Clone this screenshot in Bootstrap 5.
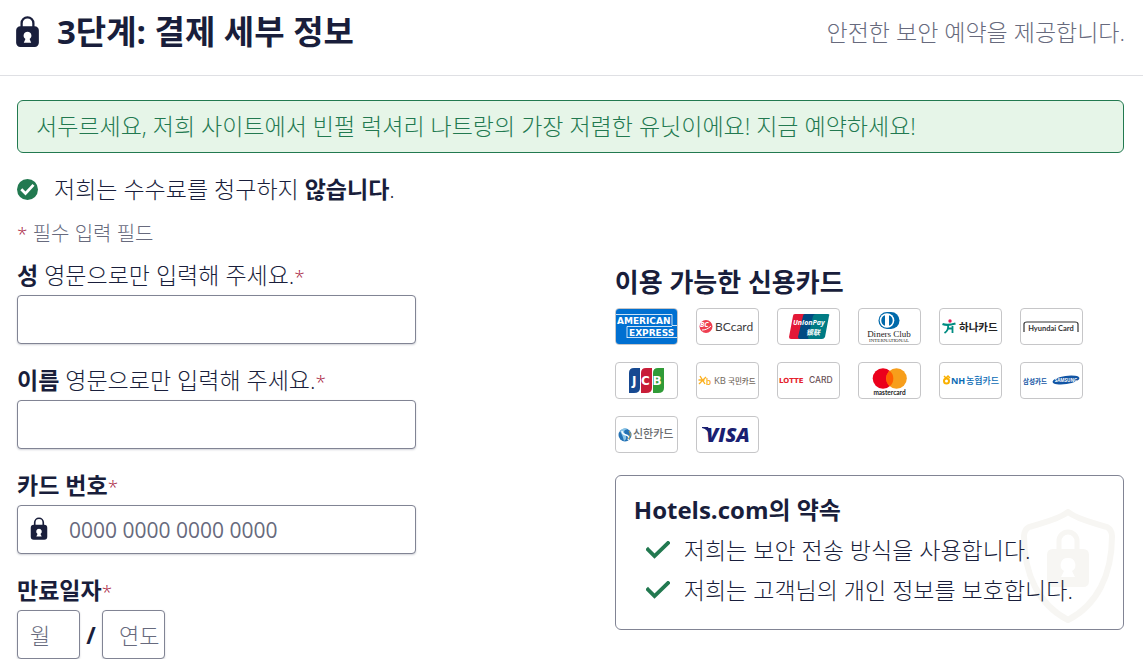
<!DOCTYPE html>
<html lang="ko">
<head>
<meta charset="utf-8">
<meta name="viewport" content="width=device-width, initial-scale=1">
<title>3단계: 결제 세부 정보</title>
<link href="https://cdn.jsdelivr.net/npm/bootstrap@5.3.0/dist/css/bootstrap.min.css" rel="stylesheet">
<style>
  :root { --ink: #191e3b; --muted: #676a7d; --line: #818494; --green: #227950; }
  body { font-family: "Open Sans", "Noto Sans CJK KR", sans-serif; font-size: 23px; line-height: 30px; font-weight: 300; color: var(--ink); background: #fff; }
  .page-head { height: 76px; padding: 0 18px 12px 15px; border-bottom: 1px solid #dfe0e4; }
  .page-head h1 { font-size: 33px; line-height: 40px; font-weight: 700; gap: 17px; }
  .page-body { padding: 24px 19px 0 17px; }
  .muted { color: var(--muted); }
  .deal { padding: 10px 18px 11px; border: 1px solid var(--green); border-radius: 6px; color: var(--green); background: #e6f5e8; }
  .no-fee { height: 30px; margin-top: 21px; }
  .no-fee b, .field-label b { font-weight: 700; }
  .hint { height: 26px; margin-top: 17px; font-size: 20px; line-height: 26px; }
  .star { color: #a7183c; font-size: 19px; line-height: 20px; }
  .pay-grid { display: grid; grid-template-columns: 36% 46%; justify-content: space-between; align-items: start; margin-top: 14px; }
  .fields { display: grid; gap: 22px; }
  .field-label { display: block; height: 30px; margin-bottom: 4px; line-height: 28px; white-space: nowrap; }
  .form-control { height: 49px; padding: 0 12px; border: 1px solid var(--line); border-radius: 4px; box-shadow: 0 1px 2px #191e3b33; color: var(--ink); font-size: 21px; font-weight: 300; }
  .form-control::placeholder { color: var(--muted); opacity: 1; }
  .card-number { padding-left: 51px; font-weight: 400; }
  .lock-mark { left: 13px; top: 11px; }
  .expiry { width: 63px; padding-right: 2px; font-size: 22px; }
  .expiry-year { padding-left: 16px; }
  .slash { width: 22px; text-align: center; font-weight: 700; }
  .side-title { padding-top: 3px; font-size: 26px; line-height: 36px; font-weight: 700; }
  .brands { display: flex; flex-wrap: wrap; gap: 17px 18px; margin: 8px 0 22px; padding: 0; list-style: none; }
  .brands svg { display: block; width: 63px; height: 37px; border: 1px solid #c6c6c8; border-radius: 4px; }
  .promise { padding: 17px 18px 19px; border: 1px solid var(--line); border-radius: 6px; }
  .promise h2 { font-size: 24px; line-height: 34px; font-weight: 700; }
  .promise ul { margin: 3px 0 0; }
  .promise li { display: flex; align-items: center; gap: 14px; height: 40px; padding-left: 12px; white-space: nowrap; }
  .promise ul, .promise h2 { position: relative; z-index: 1; }
  .shield { right: 8px; top: 33px; }
</style>
</head>
<body>
<svg class="d-none" aria-hidden="true">
  <symbol id="lock" viewBox="0 0 24 30">
    <path d="M6.300 11V7a5.700 5.700 0 0 1 11.400 0v4" fill="none" stroke="currentColor" stroke-width="2.200"/>
    <path fill="currentColor" fill-rule="evenodd" d="M5 10h14a4 4 0 0 1 4 4v12a4 4 0 0 1-4 4H5a4 4 0 0 1-4-4V14a4 4 0 0 1 4-4zm7 5.200a3.800 3.800 0 0 0-2 7l-1.600 3.600h7.200L14 22.200a3.800 3.800 0 0 0-2-7z"/>
  </symbol>
  <symbol id="tick" viewBox="0 0 24 18">
    <path d="M2 8.500l6.500 6.500L22 2" fill="none" stroke="#227950" stroke-width="3.800" stroke-linecap="square"/>
  </symbol>
</svg>

<header class="page-head d-flex align-items-center justify-content-between">
  <h1 class="d-flex align-items-center m-0"><svg width="25" height="31" aria-hidden="true"><use href="#lock"/></svg>3단계: 결제 세부 정보</h1>
  <span class="muted">안전한 보안 예약을 제공합니다.</span>
</header>

<main class="page-body">
  <div class="deal" role="status">서두르세요, 저희 사이트에서 빈펄 럭셔리 나트랑의 가장 저렴한 유닛이에요! 지금 예약하세요!</div>

  <p class="no-fee d-flex align-items-center mb-0">
    <svg class="me-3" width="21" height="21" viewBox="0 0 21 21" aria-hidden="true"><circle cx="10.500" cy="10.500" r="10.500" fill="#227950"/><path d="M4.300 10.200l4.200 4.200 8-8.500" fill="none" stroke="#fff" stroke-width="2.800"/></svg>
    <span>저희는 수수료를 청구하지 <b>않습니다</b>.</span>
  </p>
  <p class="hint muted mb-0"><span class="star">*</span> 필수 입력 필드</p>

  <div class="pay-grid">
    <form class="fields">
      <div>
        <label class="field-label" for="last"><b>성</b> 영문으로만 입력해 주세요.<span class="star">*</span></label>
        <input class="form-control" id="last" type="text" required>
      </div>
      <div>
        <label class="field-label" for="first"><b>이름</b> 영문으로만 입력해 주세요.<span class="star">*</span></label>
        <input class="form-control" id="first" type="text" required>
      </div>
      <div>
        <label class="field-label" for="number"><b>카드 번호</b><span class="star">*</span></label>
        <div class="position-relative">
          <svg class="lock-mark position-absolute" width="18" height="25" aria-hidden="true"><use href="#lock"/></svg>
          <input class="form-control card-number" id="number" type="text" inputmode="numeric" placeholder="0000 0000 0000 0000" required>
        </div>
      </div>
      <div>
        <label class="field-label" for="month"><b>만료일자</b><span class="star">*</span></label>
        <div class="d-flex align-items-center">
          <input class="form-control expiry" id="month" type="text" placeholder="월" required>
          <span class="slash">/</span>
          <input class="form-control expiry expiry-year" id="year" type="text" placeholder="연도" aria-label="연도" required>
        </div>
      </div>
    </form>

    <aside>
      <h2 class="side-title m-0">이용 가능한 신용카드</h2>
      <ul class="brands">
        <li><svg viewBox="0 0 61 35" role="img" aria-label="American Express"><path fill="#0070d1" d="M0 0h61v35H0z"/><path fill="none" stroke="#fff" stroke-width=".8" d="M0 5.500h56v11h5M11 29V17.500h45M11 28.500h50"/><g font-family="DejaVu Sans" font-weight="700" fill="#fff"><text x="1" y="14.500" font-size="9">AMERICAN</text><text x="13" y="27" font-size="9">EXPRESS</text></g></svg></li>
        <li><svg viewBox="0 0 61 35" role="img" aria-label="BC card"><circle cx="9" cy="17.500" r="6.500" fill="#ee3e50"/><text x="3" y="18" font-family="Open Sans" font-size="7" font-weight="700" font-style="italic" fill="#fff">BC</text><path d="M5 21c3 0 6-1 9-4" stroke="#fff" fill="none"/><text x="18" y="22" font-family="Lato" font-size="12" font-weight="400" fill="#403c40">BCcard</text></svg></li>
        <li><svg viewBox="0 0 61 35" role="img" aria-label="UnionPay"><path fill="#e31837" d="M17 5h14l-6 25H13q-2 0-2-2l4-21q0-2 2-2z"/><path fill="#014a82" d="M27 5h13l-6 25H22q-2 0-2-2l5-21q0-2 2-2z"/><path fill="#007b84" d="M38 5h12q2 0 1 2l-4 21q-1 2-3 2H31q-1 0-1-2l5-21q1-2 3-2z"/><g fill="#fff" font-style="italic" font-weight="700"><text x="15" y="16" font-family="Open Sans" font-size="7">UnionPay</text><text x="28" y="26" font-family="Noto Sans CJK SC" font-size="7">银联</text></g></svg></li>
        <li><svg viewBox="0 0 61 35" role="img" aria-label="Diners Club"><path fill="#0069aa" d="M28 3h4a8.500 8.500 0 0 1 0 17h-4a8.500 8.500 0 0 1 0-17z"/><circle cx="28" cy="11.500" r="7.300" fill="#fff"/><path fill="#0069aa" d="M26 6.300v10.400a5.500 5.500 0 0 1 0-10.400zm4 0v10.400a5.500 5.500 0 0 0 0-10.400z"/><g fill="#1d1d1b" font-family="Liberation Serif" text-anchor="middle"><text x="30" y="27.500" font-size="9">Diners Club</text><text x="30" y="33" font-size="5">INTERNATIONAL</text></g></svg></li>
        <li><svg viewBox="0 0 61 35" role="img" aria-label="하나카드"><circle cx="10" cy="12" r="1.700" fill="#e31c58"/><path d="M2.500 15q5 2 13-.5" fill="none" stroke="#008c82" stroke-width="2.200"/><path d="M8 16q1 5-3.500 8M12.500 17v7M8 19.500h4" fill="none" stroke="#008c82" stroke-width="1.800"/><text x="19" y="22" font-family="Noto Sans CJK KR" font-weight="700" font-size="10.500" fill="#222">하나카드</text></svg></li>
        <li><svg viewBox="0 0 61 35" role="img" aria-label="Hyundai Card"><path d="M3 23v-8q0-2 3-2h48q3 0 3 2v8" fill="none" stroke="#333" stroke-width="1.200"/><text x="30" y="22" text-anchor="middle" font-family="Lato" font-weight="700" font-size="7.500" fill="#333">Hyundai Card</text></svg></li>

        <li><svg viewBox="0 0 61 35" role="img" aria-label="JCB"><path fill="#174991" d="M18 5h6v20q0 5-6 5h-5V10q0-5 5-5z"/><path fill="#c81d38" d="M30 5h6v20q0 5-6 5h-5V10q0-5 5-5z"/><path fill="#309b37" d="M42 5h6v20q0 5-6 5h-5V10q0-5 5-5z"/><g fill="#fff" font-family="DejaVu Sans" font-weight="700" font-size="12"><text x="16" y="22">J</text><text x="25" y="22">C</text><text x="36.500" y="22">B</text></g></svg></li>
        <li><svg viewBox="0 0 61 35" role="img" aria-label="KB 국민카드"><path d="M3 13l5 8M2 21l7-7M1.500 17h6" stroke="#fbb022" stroke-width="1.400"/><text x="9" y="22" font-family="Lato" font-weight="700" font-size="9" fill="#fbb022">b</text><text x="17" y="21" font-family="Open Sans" font-weight="400" font-size="9.500" fill="#71665b">KB</text><text x="31" y="21" font-family="Noto Sans CJK KR" font-weight="500" font-size="7.500" fill="#71665b">국민카드</text></svg></li>
        <li><svg viewBox="0 0 61 35" role="img" aria-label="Lotte Card"><g font-family="DejaVu Sans" font-size="7"><text x="1" y="20" font-weight="700" fill="#e5222b">LOTTE</text><text x="31" y="20" font-family="Inter" font-size="8.500" font-weight="500" fill="#6b5156">CARD</text></g></svg></li>
        <li><svg viewBox="0 0 61 35" role="img" aria-label="Mastercard"><circle cx="24" cy="15.500" r="10.300" fill="#eb001b"/><circle cx="37.500" cy="15.500" r="10.300" fill="#f79e1b"/><path fill="#ff5f00" d="M30.750 7.700a10.300 10.300 0 0 1 0 15.600 10.300 10.300 0 0 1 0-15.600z"/><text x="30.500" y="32" text-anchor="middle" font-family="Lato" font-weight="700" font-size="6.500" fill="#222">mastercard</text></svg></li>
        <li><svg viewBox="0 0 61 35" role="img" aria-label="NH농협카드"><path d="M4 13l2 2 2-2 2 2" fill="none" stroke="#f9b000" stroke-width="1.500"/><circle cx="6.500" cy="18" r="2.500" fill="none" stroke="#f9b000" stroke-width="2"/><g fill="#0a6bb5" font-weight="700"><text x="11" y="21" font-family="Open Sans" font-size="9">NH</text><text x="26" y="21" font-family="Noto Sans CJK KR" font-weight="500" font-size="9">농협카드</text></g></svg></li>
        <li><svg viewBox="0 0 61 35" role="img" aria-label="삼성카드"><text x="2" y="21" font-family="Noto Sans CJK KR" font-weight="700" font-size="6.500" fill="#1255a4">삼성카드</text><ellipse cx="45" cy="17" rx="13.500" ry="4" transform="rotate(-8 45 17)" fill="#1255a4"/><text x="45" y="19" text-anchor="middle" font-family="Open Sans" font-weight="700" font-size="4.500" fill="#fff">SAMSUNG</text></svg></li>

        <li><svg viewBox="0 0 61 35" role="img" aria-label="신한카드"><circle cx="9" cy="18" r="6.500" fill="#2472b5"/><path d="M4 14a6.500 6.500 0 0 1 8-2q-6 1-3 5 3 5-1 7-1-5-4-10z" fill="#8ac5e7"/><path d="M6 14q0 3 4 4t2 5" stroke="#fff" fill="none" stroke-width="1.400"/><path d="M13 14q3 4-1 8" stroke="#c3a552" fill="none"/><text x="17" y="21" font-family="Noto Sans CJK KR" font-weight="500" font-size="11" fill="#6b6d70">신한카드</text></svg></li>
        <li><svg viewBox="0 0 61 35" role="img" aria-label="Visa"><path d="M5 10h6l3 6-2 1q-2-5-7-6z" fill="#1a1f71"/><text x="9" y="25" font-family="Open Sans" font-weight="800" font-style="italic" font-size="20" fill="#1a1f71">VISA</text></svg></li>
      </ul>

      <section class="promise position-relative">
        <svg class="shield position-absolute" width="94" height="114" viewBox="0 0 94 114" aria-hidden="true">
          <path d="M47 3C37 11 20 14 8 18q-5 3-5 9c0 39 15 69 44 84 29-15 44-45 44-84q0-6-5-9C74 14 57 11 47 3z" fill="none" stroke="#f7f6f3" stroke-width="6" stroke-linejoin="round"/>
          <path d="M38 43V32a9 9 0 0 1 18 0v11" fill="none" stroke="#f7f6f3" stroke-width="5"/>
          <path fill="#f7f6f3" fill-rule="evenodd" d="M32 40h30q6 0 6 6v26q0 6-6 6H32q-6 0-6-6V46q0-6 6-6zm15 9a7 7 0 0 0-4 13l-3 6h14l-3-6a7 7 0 0 0-4-13z"/>
        </svg>
        <h2 class="m-0">Hotels.com의 약속</h2>
        <ul class="list-unstyled">
          <li><svg width="24" height="18" aria-hidden="true"><use href="#tick"/></svg>저희는 보안 전송 방식을 사용합니다.</li>
          <li><svg width="24" height="18" aria-hidden="true"><use href="#tick"/></svg>저희는 고객님의 개인 정보를 보호합니다.</li>
        </ul>
      </section>
    </aside>
  </div>
</main>
<script src="https://cdn.jsdelivr.net/npm/bootstrap@5.3.0/dist/js/bootstrap.bundle.min.js"></script>
</body>
</html>
